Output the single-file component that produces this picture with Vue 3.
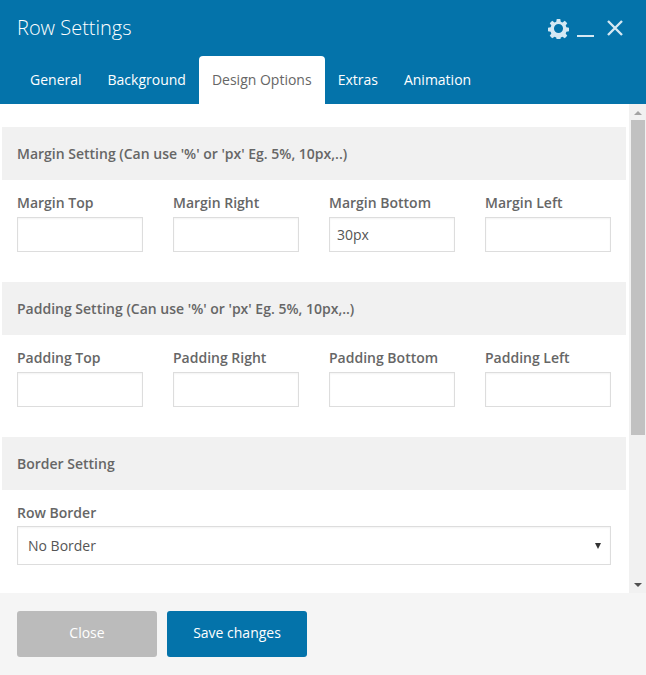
<script setup>
const sections = [
  { title: "Margin Setting (Can use '%' or 'px' Eg. 5%, 10px,..)", fields: [
    { label: 'Margin Top', value: '' }, { label: 'Margin Right', value: '' },
    { label: 'Margin Bottom', value: '30px' }, { label: 'Margin Left', value: '' } ] },
  { title: "Padding Setting (Can use '%' or 'px' Eg. 5%, 10px,..)", fields: [
    { label: 'Padding Top', value: '' }, { label: 'Padding Right', value: '' },
    { label: 'Padding Bottom', value: '' }, { label: 'Padding Left', value: '' } ] },
]
const tabs = ['General', 'Background', 'Design Options', 'Extras', 'Animation']
</script>

<template>
  <div class="modal">
    <header class="head">
      <div class="titlebar">
        <h1 class="title">Row Settings</h1>
        <div class="tools">
          <svg class="gear" width="21" height="21" viewBox="0 0 24 24" aria-hidden="true">
            <path fill="#d5e8f3" fill-rule="evenodd" d="M10 1h4l.6 3.2 1.9.8 2.7-1.8 2.8 2.8-1.8 2.7.8 1.9 3 .6v4l-3 .6-.8 1.900 1.800 2.700-2.800 2.800-2.700-1.800-1.900.8-.6 3h-4l-.6-3-1.900-.8-2.700 1.800-2.800-2.800 1.800-2.700-.8-1.900-3-.6v-4l3-.6.8-1.900-1.800-2.700 2.800-2.800 2.700 1.800 1.900-.8zM12 6.800a5.200 5.200 0 1 0 0 10.400 5.200 5.200 0 0 0 0-10.400z"/>
          </svg>
          <span class="minimize"></span>
          <svg class="close" width="18" height="18" viewBox="0 0 18 18" aria-hidden="true">
            <path d="M2 2l14 14M16 2L2 16" stroke="#d5e8f3" stroke-width="2.400" fill="none"/>
          </svg>
        </div>
      </div>
      <nav class="tabs">
        <span v-for="t in tabs" :key="t" class="tab" :class="{ active: t === 'Design Options' }">{{ t }}</span>
      </nav>
    </header>

    <div class="viewport">
      <main class="content">
        <section v-for="s in sections" :key="s.title" class="section">
          <h2 class="bar">{{ s.title }}</h2>
          <div class="grid">
            <label v-for="f in s.fields" :key="f.label" class="field">
              <span class="label">{{ f.label }}</span>
              <input class="input" type="text" :value="f.value" />
            </label>
          </div>
        </section>
        <section class="section">
          <h2 class="bar">Border Setting</h2>
          <div class="single">
            <span class="label">Row Border</span>
            <div class="select">
              <span>No Border</span>
              <i class="caret"></i>
            </div>
          </div>
        </section>
      </main>
      <div class="scrollbar">
        <i class="arrow up"></i>
        <div class="track"><div class="thumb"></div></div>
        <i class="arrow down"></i>
      </div>
    </div>

    <footer class="foot">
      <button class="btn grey" type="button">Close</button>
      <button class="btn blue" type="button">Save changes</button>
    </footer>
  </div>
</template>

<style>
html, body { margin: 0; padding: 0; background: #f5f5f5; }
</style>

<style scoped>
.modal {
  width: 646px;
  height: 675px;
  display: flex;
  flex-direction: column;
  overflow: hidden;
  font-family: "Open Sans", "Liberation Sans", sans-serif;
  color: #666;
}
.head { height: 104px; background: #0473aa; flex: none; display: flex; flex-direction: column; justify-content: space-between; }
.titlebar { display: flex; align-items: center; justify-content: space-between; padding: 14px 22px 0 17px; height: 28px; }
.title { margin: 0; font-size: 20px; font-weight: 300; color: #fff; line-height: 28px; }
.tools { display: flex; align-items: center; }
.gear { margin-right: 8px; }
.minimize { width: 17px; height: 2px; background: #d5e8f3; margin-top: 15px; margin-right: 12px; }
.tabs { display: flex; height: 48px; padding-left: 17px; }
.tab { padding: 0 13px; line-height: 48px; font-size: 14px; font-weight: 500; color: #fff; border-radius: 4px 4px 0 0; }
.tab.active { background: #fff; color: #666; font-weight: 400; }
.viewport { flex: none; height: 489px; background: #fff; display: flex; }
.content { flex: none; width: 629px; padding: 23px 3px 0 2px; box-sizing: border-box; overflow: hidden; }
.section { margin-bottom: 30px; }
.bar { margin: 0; height: 53px; line-height: 53px; padding-left: 15px; background: #f1f1f1; font-size: 14px; font-weight: 600; color: #666; white-space: nowrap; }
.grid { display: grid; grid-template-columns: repeat(4, 126px); column-gap: 30px; padding: 13px 0 0 15px; }
.field { display: flex; flex-direction: column; }
.label { font-size: 14px; font-weight: 600; line-height: 20px; color: #666; display: block; margin-bottom: 4px; }
.input { box-sizing: border-box; width: 126px; height: 35px; border: 1px solid #ddd; padding: 0 7px; margin: 0; font: 400 14px "Open Sans", sans-serif; color: #555; background: #fff; box-shadow: inset 0 1px 2px rgba(0,0,0,.05); outline: none; border-radius: 0; }
.single { padding: 13px 15px 0; }
.select { box-sizing: border-box; width: 594px; height: 39px; border: 1px solid #ddd; padding: 0 9px 0 10px; display: flex; align-items: center; justify-content: space-between; font-size: 14px; color: #555; box-shadow: inset 0 1px 2px rgba(0,0,0,.05); margin-top: -1px; }
.caret { width: 0; height: 0; border-left: 3px solid transparent; border-right: 3px solid transparent; border-top: 6px solid #333; }
.scrollbar { flex: none; width: 17px; background: #f1f1f1; display: flex; flex-direction: column; align-items: center; }
.arrow { display: block; width: 0; height: 0; border-left: 4px solid transparent; border-right: 4px solid transparent; flex: none; }
.arrow.up { border-bottom: 4px solid #a3a3a3; margin-top: 7px; }
.arrow.down { border-top: 4px solid #505050; margin-bottom: 6px; }
.track { flex: 1; width: 100%; padding-top: 5px; box-sizing: border-box; }
.thumb { width: 14px; height: 315px; background: #c1c1c1; margin: 0 auto; }
.foot { flex: 1; background: #f5f5f5; display: flex; gap: 10px; padding: 18px 0 0 17px; box-sizing: border-box; }
.btn { width: 140px; height: 46px; border: 0; border-radius: 3px; color: #fff; font: 500 14px/44px "Open Sans", sans-serif; padding: 0 0 2px; }
.btn.grey { background: #bbb; }
.btn.blue { background: #0473aa; }
</style>
